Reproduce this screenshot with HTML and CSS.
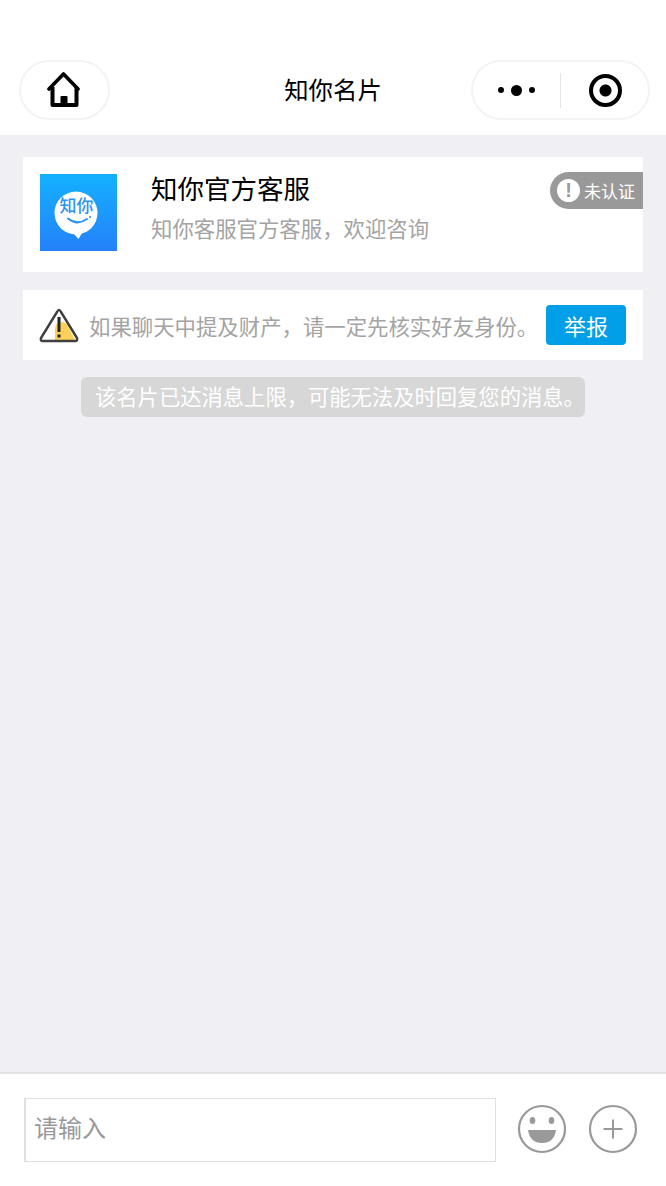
FILE: index.html
```html
<!DOCTYPE html>
<html lang="zh-CN">
<head>
  <meta charset="UTF-8">
  <title>知你名片</title>
  <link rel="stylesheet" href="styles.css">
</head>
<body>
  <div class="page">
    <header class="nav">
      <div class="pill home-pill">
        <svg class="home-icon" width="36" height="38" viewBox="0 0 36 38">
          <path d="M2 18 L16.500 3 L31 18" fill="none" stroke="#000" stroke-width="3.600" stroke-linecap="round" stroke-linejoin="round"/>
          <path d="M5.500 16 V34 H29.500 V16" fill="none" stroke="#000" stroke-width="4" stroke-linejoin="round"/>
          <rect x="13.500" y="25" width="7" height="10" rx="1" fill="#000"/>
        </svg>
      </div>
      <h1 class="nav-title">知你名片</h1>
      <div class="pill menu-pill">
        <div class="dots">
          <span class="dot"></span>
          <span class="dot big"></span>
          <span class="dot"></span>
        </div>
        <span class="divider"></span>
        <div class="target"><span></span></div>
      </div>
    </header>

    <main class="content">
      <section class="card">
        <svg class="logo" width="77" height="77" viewBox="0 0 77 77">
          <defs>
            <linearGradient id="logoBg" x1="0" y1="0" x2="0" y2="1">
              <stop offset="0" stop-color="#13b1fe"/>
              <stop offset="1" stop-color="#2581fb"/>
            </linearGradient>
          </defs>
          <rect width="77" height="77" fill="url(#logoBg)"/>
          <circle cx="36" cy="39" r="21.500" fill="#fff"/>
          <path d="M33 59 L38.500 65 L42 59 Z" fill="#fff"/>
          <text x="36.500" y="38" class="logo-text">知你</text>
          <path d="M28 44.500 Q37 52 47 45" fill="none" stroke="#2a93f5" stroke-width="2" stroke-linecap="round"/>
          <circle cx="50" cy="43" r="1.100" fill="#2a93f5"/>
        </svg>
        <div class="card-info">
          <div class="card-name">知你官方客服</div>
          <div class="card-desc">知你客服官方客服，欢迎咨询</div>
        </div>
        <div class="badge">
          <span class="badge-icon">!</span>
          <span>未认证</span>
        </div>
      </section>

      <section class="warn">
        <svg class="warn-icon" width="42" height="36" viewBox="0 0 42 36">
          <path d="M17 22 Q17 15 24 15 Q29 15 31 21 L37 33 H17 Z" fill="#fdd05a"/>
          <path d="M21 3 Q22 3 23 5 L39 31 Q40 34 37 34 H5 Q2 34 3 31 L19 5 Q20 3 21 3 Z" fill="none" stroke="#3f3f3f" stroke-width="2.400" stroke-linejoin="round"/>
          <rect x="19.500" y="10" width="3" height="15" fill="#222"/>
          <rect x="19.500" y="27.500" width="3" height="3" fill="#222"/>
        </svg>
        <p class="warn-text">如果聊天中提及财产，请一定先核实好友身份。</p>
        <button type="button" class="report">举报</button>
      </section>

      <div class="notice-wrap">
        <div class="notice">该名片已达消息上限，可能无法及时回复您的消息。</div>
      </div>
    </main>

    <footer class="bar">
      <div class="input">请输入</div>
      <svg class="bar-icon" width="50" height="50" viewBox="0 0 50 50">
        <circle cx="25" cy="25" r="23" fill="none" stroke="#999" stroke-width="2.200"/>
        <ellipse cx="15.500" cy="16.500" rx="2.800" ry="3.500" fill="#999"/>
        <ellipse cx="34.500" cy="16.500" rx="2.800" ry="3.500" fill="#999"/>
        <path d="M11 26 H39 Q37 39 25 39 Q13 39 11 26 Z" fill="#999"/>
      </svg>
      <svg class="bar-icon" width="50" height="50" viewBox="0 0 50 50">
        <circle cx="25" cy="25" r="23" fill="none" stroke="#999" stroke-width="2.200"/>
        <path d="M15.500 25 H34.500 M25 15.500 V34.500" stroke="#999" stroke-width="2" fill="none"/>
      </svg>
    </footer>
  </div>
</body>
</html>
```

FILE: styles.css
```css
* {
  margin: 0;
  padding: 0;
  box-sizing: border-box;
}
html, body {
  height: 100%;
  background-color: #efeff4;
  font-family: "Liberation Sans", "Noto Sans CJK SC", sans-serif;
}
.page {
  height: 1186px;
  display: flex;
  flex-direction: column;
}
.nav {
  height: 135px;
  background: #fff;
  padding: 60px 16px 15px 19px;
  display: grid;
  grid-template-columns: 180px 1fr 180px;
  align-items: center;
}
.pill {
  height: 60px;
  border: 2px solid #f3f3f3;
  border-radius: 30px;
  display: flex;
  align-items: center;
  justify-content: center;
}
.home-pill {
  width: 91px;
}
.menu-pill {
  width: 179px;
  justify-self: end;
}
.nav-title {
  padding: 0 3px 3px 0;
  text-align: center;
  font-size: 24.400px;
  font-weight: 400;
  color: #000;
}
.dots {
  width: 87px;
  display: flex;
  align-items: center;
  justify-content: center;
  gap: 7px;
}
.dot {
  width: 6px;
  height: 6px;
  border-radius: 50%;
  background: #000;
}
.dot.big {
  width: 11px;
  height: 11px;
}
.divider {
  width: 1px;
  height: 35px;
  background: #e4e4e4;
}
.target {
  width: 88px;
  padding-left: 3px;
  display: flex;
  justify-content: center;
}
.target span {
  width: 33px;
  height: 33px;
  border: 4.500px solid #000;
  border-radius: 50%;
  background: radial-gradient(circle, #000 0, #000 5.500px, #fff 6.500px);
}
.content {
  flex: 1;
  padding: 22px 23px 0;
}
.card {
  height: 115px;
  background: #fff;
  padding: 17px;
  display: flex;
  position: relative;
}
.logo {
  flex: none;
}
.logo-text {
  font-size: 17px;
  font-weight: 500;
  fill: #2a93f5;
  text-anchor: middle;
}
.card-info {
  margin-left: 34px;
}
.card-name {
  font-size: 26.500px;
  line-height: 32px;
  color: #000;
}
.card-desc {
  margin-top: 9px;
  font-size: 21.400px;
  line-height: 30px;
  color: #a3a3a3;
}
.badge {
  position: absolute;
  top: 15px;
  right: 0;
  width: 93px;
  height: 37px;
  padding-left: 7px;
  background: #999;
  border-radius: 18.500px 0 0 18.500px;
  display: flex;
  align-items: center;
  gap: 4px;
  font-size: 17px;
  color: #fff;
  white-space: nowrap;
}
.badge-icon {
  width: 23px;
  height: 23px;
  border-radius: 50%;
  background: #fff;
  color: #999;
  font-size: 20px;
  font-weight: 700;
  line-height: 23px;
  text-align: center;
  flex: none;
}
.warn {
  margin-top: 18px;
  height: 70px;
  background: #fff;
  padding: 0 17px 0 15px;
  display: flex;
  align-items: center;
}
.warn-icon {
  flex: none;
}
.warn-text {
  flex: 1;
  margin-left: 9px;
  font-size: 21.400px;
  color: #a3a3a3;
  white-space: nowrap;
}
.report {
  width: 80px;
  height: 40px;
  border: none;
  border-radius: 4px;
  background: #009fe8;
  color: #fff;
  font-family: inherit;
  font-size: 22px;
}
.notice-wrap {
  margin-top: 17px;
  display: flex;
  justify-content: center;
}
.notice {
  width: 504px;
  height: 40px;
  line-height: 42px;
  padding-left: 14px;
  background: #d7d7d7;
  border-radius: 6px;
  color: #fff;
  font-size: 21.300px;
  white-space: nowrap;
}
.bar {
  height: 114px;
  background: #fff;
  border-top: 2px solid #e2e2e2;
  padding: 24px 28px 0 24px;
  display: flex;
  align-items: flex-start;
}
.input {
  width: 472px;
  height: 64px;
  border: 1px solid #e0e0e0;
  border-left-width: 2px;
  padding-left: 8px;
  font-size: 24px;
  line-height: 60px;
  color: #999;
}
.bar-icon {
  margin: 6px 0 0 21px;
  flex: none;
}
```
